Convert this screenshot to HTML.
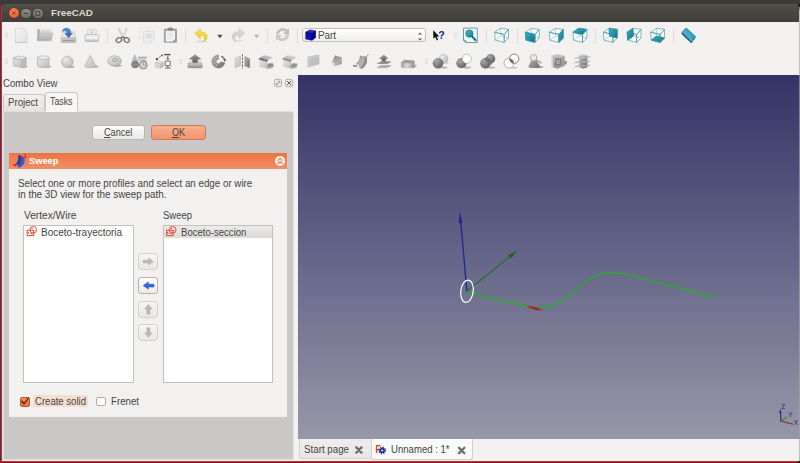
<!DOCTYPE html>
<html><head><meta charset="utf-8"><title>FreeCAD</title>
<style>
*{box-sizing:border-box;margin:0;padding:0}
html,body{width:800px;height:463px;overflow:hidden;background:#f2f1f0;font-family:"Liberation Sans","DejaVu Sans",sans-serif;font-size:10px;color:#3c3b37}
#root{position:absolute;left:0;top:0;width:800px;height:463px;overflow:hidden;background:#f2f1f0}
.abs{position:absolute}
.t{position:absolute;white-space:nowrap;line-height:1;transform-origin:0 0;color:#45443f;font-size:10px}
svg{position:absolute;overflow:visible}
.btn{position:absolute;border:1px solid #b9b6b0;border-radius:3px;background:linear-gradient(#fdfdfc,#ebe9e6)}
.arrowbtn{position:absolute;width:20px;height:17px;border:1px solid #d2cfcb;border-radius:3px;background:linear-gradient(#f6f5f4,#e9e7e4)}
.list{position:absolute;background:#fff;border:1px solid #c4c1bc}
.sep{position:absolute;width:1px;height:16px;top:27.500px;background:#dfddda}
.hdl{position:absolute;width:3px;height:1px;background:#dad8d5;box-shadow:0 2px 0 #dad8d5,0 4px 0 #dad8d5}
</style></head><body>
<div id="root">
 <!-- desktop edges -->
 <div class="abs" style="left:0;top:0;width:2px;height:463px;background:linear-gradient(90deg,#7e1f2e 0,#7e1f2e 50%,#a0606a 100%)"></div>
 <div class="abs" style="left:0;top:461px;width:800px;height:2px;background:linear-gradient(#a83a42 0,#a83a42 50%,#9a0d18 50%)"></div>
 
 <div class="abs" style="left:798px;top:461px;width:2px;height:2px;background:#1a0a0a"></div>
 <!-- desktop top panel -->
 <div class="abs" id="toppanel" style="left:0;top:0;width:800px;height:5px;background:#3c3b37"></div>
 <div class="abs" style="left:2px;top:4px;width:798px;height:6px;background:#3c3b37"></div>
 <!-- title bar -->
 <div class="abs" id="titlebar" style="left:2px;top:4px;width:797px;height:18px;background:linear-gradient(#54524d 0,#4a4944 30%,#3f3e3a 100%);border-radius:4px 4px 0 0"></div>
 <div class="abs" style="left:9px;top:8px;width:10px;height:10px;border-radius:50%;background:radial-gradient(circle at 50% 35%,#f58257,#e0562a);box-shadow:0 0 0 .6px #5a2a18"></div>
 <div class="abs" style="left:21px;top:8.5px;width:9.5px;height:9.5px;border-radius:50%;background:linear-gradient(#8f8d87,#6d6c66);box-shadow:0 0 0 .6px #3a3935"></div>
 <div class="abs" style="left:33px;top:8.5px;width:9.5px;height:9.5px;border-radius:50%;background:linear-gradient(#8f8d87,#6d6c66);box-shadow:0 0 0 .6px #3a3935"></div>
 <svg style="left:9px;top:8px" width="34" height="10" viewBox="0 0 34 10"><path d="M3.400 3.400l3.200 3.200M6.600 3.400l-3.200 3.200" stroke="#8a3412" stroke-width=".9" fill="none"/><path d="M14.6 5.3h4.4" stroke="#45443f" stroke-width="1.1"/><rect x="26.8" y="3.3" width="4" height="4" fill="none" stroke="#45443f" stroke-width="1"/></svg>
 <span class="t" id="title" style="transform:scaleX(1.03);left:51.300px;top:8px;font-size:9.500px;font-weight:bold;color:#dfdbd2">FreeCAD</span>

 <!-- TOOLBARS -->
 <div id="toolbars">
  <div class="hdl" style="left:5px;top:33px"></div>
  <div class="hdl" style="left:5px;top:59px"></div>
  <div class="hdl" style="left:179px;top:59px"></div>
  <div class="hdl" style="left:425px;top:59px"></div>
  <div class="hdl" style="left:454px;top:33px"></div>
  <div class="sep" style="left:107px"></div>
  <div class="sep" style="left:185px"></div>
  <div class="sep" style="left:267px"></div>
  <div class="sep" style="left:297px"></div>
  <div class="sep" style="left:486px"></div>
  <div class="sep" style="left:517px"></div>
  <div class="sep" style="left:595px"></div>
  <div class="sep" style="left:673px"></div>
  <!-- workbench combo -->
  <div class="abs" style="left:302px;top:28px;width:124px;height:14px;border:1px solid #c3c0ba;border-radius:3px;background:linear-gradient(#ffffff,#f0efed)"></div>
  <span class="t" id="tpart" style="transform:scaleX(0.98);left:318px;top:30.5px">Part</span>
  <svg id="icons" style="left:0;top:0" width="800" height="76" viewBox="0 0 800 76"><defs>
<linearGradient id="gPaper" x1="0" y1="0" x2="1" y2="1"><stop offset="0" stop-color="#f3f3f3"/><stop offset="1" stop-color="#e2e2e2"/></linearGradient>
<linearGradient id="gFolder" x1="0" y1="0" x2="0" y2="1"><stop offset="0" stop-color="#cecece"/><stop offset="1" stop-color="#aeaeae"/></linearGradient>
<linearGradient id="gDrive" x1="0" y1="0" x2="0" y2="1"><stop offset="0" stop-color="#d2d2d2"/><stop offset="1" stop-color="#b6b6b6"/></linearGradient>
<linearGradient id="gPrint" x1="0" y1="0" x2="0" y2="1"><stop offset="0" stop-color="#ebebeb"/><stop offset="1" stop-color="#d6d6d6"/></linearGradient>
<linearGradient id="gUndo" x1="0" y1="0" x2="0" y2="1"><stop offset="0" stop-color="#f8e45c"/><stop offset="1" stop-color="#ecc81c"/></linearGradient>
<linearGradient id="gRedo" x1="0" y1="0" x2="0" y2="1"><stop offset="0" stop-color="#dedede"/><stop offset="1" stop-color="#c4c4c4"/></linearGradient>
<linearGradient id="gTeal" x1="0" y1="0" x2="1" y2="1"><stop offset="0" stop-color="#4cc0d8"/><stop offset="1" stop-color="#0e7e98"/></linearGradient>
<linearGradient id="gTeal2" x1="0" y1="0" x2="1" y2="1"><stop offset="0" stop-color="#3cb4cc"/><stop offset="1" stop-color="#0a7088"/></linearGradient>
<linearGradient id="gG1" x1="0" y1="0" x2="1" y2="1"><stop offset="0" stop-color="#e6e6e6"/><stop offset="1" stop-color="#bcbcbc"/></linearGradient>
<linearGradient id="gG2" x1="0" y1="0" x2="1" y2="1"><stop offset="0" stop-color="#bababa"/><stop offset="1" stop-color="#6e6e6e"/></linearGradient>
<linearGradient id="gG3" x1="0" y1="0" x2="0" y2="1"><stop offset="0" stop-color="#9a9a9a"/><stop offset="1" stop-color="#5e5e5e"/></linearGradient>
<linearGradient id="gG4" x1="0" y1="0" x2="0" y2="1"><stop offset="0" stop-color="#c8c8c8"/><stop offset="1" stop-color="#8e8e8e"/></linearGradient>
<linearGradient id="gLoft" x1="0" y1="0" x2="1" y2=".6"><stop offset="0" stop-color="#767676"/><stop offset=".5" stop-color="#c2c2c2"/><stop offset="1" stop-color="#9c9c9c"/></linearGradient>
<linearGradient id="gSw" x1="0" y1="0" x2="1" y2="1"><stop offset="0" stop-color="#8c8c8c"/><stop offset=".5" stop-color="#b4b4b4"/><stop offset="1" stop-color="#929292"/></linearGradient>
<linearGradient id="gRul" x1="0" y1="1" x2="1" y2="0"><stop offset="0" stop-color="#157a96"/><stop offset=".45" stop-color="#44b4d4"/><stop offset="1" stop-color="#157a96"/></linearGradient>
<linearGradient id="gArrow" x1="0" y1="0" x2="0" y2="1"><stop offset="0" stop-color="#5c92d2"/><stop offset="1" stop-color="#2c5ea8"/></linearGradient>
<linearGradient id="gCyl" x1="0" y1="0" x2="1" y2="0"><stop offset="0" stop-color="#9c9c9c"/><stop offset=".45" stop-color="#dcdcdc"/><stop offset="1" stop-color="#8c8c8c"/></linearGradient>
<radialGradient id="gS1" cx=".35" cy=".3" r=".8"><stop offset="0" stop-color="#eaeaea"/><stop offset="1" stop-color="#b4b4b4"/></radialGradient>
<radialGradient id="gS2" cx=".35" cy=".3" r=".8"><stop offset="0" stop-color="#a8a8a8"/><stop offset="1" stop-color="#5c5c5c"/></radialGradient>
</defs>
<g transform="translate(15,28)"><path d="M0.3 0.3h9l2.7 2.7v11.3h-11.7z" fill="url(#gPaper)" stroke="#cfcfcf" stroke-width=".7"/><path d="M9.3 0.3v2.7h2.7" fill="#fafafa" stroke="#d4d4d4" stroke-width=".6"/><path d="M0 14.6h12.3" stroke="#c4c4c4" stroke-width=".8"/></g>
<g transform="translate(37,28)"><path d="M0.200 1.200h3l.8 1h0v10.600h-3.800z" fill="#b2b2b2"/><path d="M0.200 9h2v3.800h-2z" fill="#a2a2a2"/><path d="M3.200 0.200h11v5.400h-11z" fill="#fbfbfb" stroke="#cfcfcf" stroke-width=".5"/><path d="M4 1.600h9.600v4h-9.600z" fill="#d6d6d6"/><path d="M3.400 5h12.600l-1.800 7.800h-13.200z" fill="url(#gFolder)" stroke="#ababab" stroke-width=".4"/></g>
<g transform="translate(61,28)"><path d="M1.800 3.800h11.400l1.400 6.200h-14.200z" fill="#e6e6e6" stroke="#bdbdbd" stroke-width=".6"/><path d="M0.300 10h14.400v4.100q0 .5-.5 .5h-13.400q-.5 0-.5-.5z" fill="url(#gDrive)" stroke="#a6a6a6" stroke-width=".6"/><path d="M1.800 12.400h11.400" stroke="#989898" stroke-width="1.100"/><path d="M1.200 3.600q.4-3.500 4.400-3.700q3.600.1 4.200 4.100l0 1.200h1.700l-3.900 4.600l-3.900-4.600h2.100l0-1q-.3-1.500-1.800-1.500q-1.700 0-2.800 .9z" fill="url(#gArrow)" stroke="#2c5c9c" stroke-width=".3"/></g>
<g transform="translate(85,29)"><path d="M2.600 0.300h8.600v5.500h-8.600z" fill="#ececec" stroke="#c2c2c2" stroke-width=".6"/><path d="M6.900 1.500v2.600m-1.500-1.200l1.500 1.400l1.500-1.400" stroke="#bdbdbd" stroke-width=".8" fill="none"/><path d="M1 5.400h11.800q1 0 1 1v5.600h-13.800v-5.600q0-1 1-1z" fill="url(#gPrint)" stroke="#b4b4b4" stroke-width=".6"/><path d="M1.400 8.600h11" stroke="#fafafa" stroke-width="1.600"/><path d="M0.200 12.400h13.400" stroke="#b0b0b0" stroke-width=".9"/></g>
<g transform="translate(115.600,27.600)" fill="none"><path d="M3.200 0.400l4.800 9.800" stroke="#dadada" stroke-width="2.200"/><path d="M11.200 0.400l-4.800 9.800" stroke="#e0e0e0" stroke-width="2.200"/><path d="M2.300 0.600l4.700 9.600M12.100 .6l-4.700 9.600" stroke="#b4b4b4" stroke-width=".4"/><ellipse cx="3.300" cy="12.500" rx="2.800" ry="2.200" transform="rotate(-30 3.300 12.500)" stroke="#747474" stroke-width="1.400"/><ellipse cx="11.100" cy="12.500" rx="2.800" ry="2.200" transform="rotate(30 11.100 12.500)" stroke="#747474" stroke-width="1.400"/><path d="M5.300 10.800l1.900-1.800l1.900 1.800" stroke="#747474" stroke-width="1.300"/></g>
<g transform="translate(138.800,27.600)"><path d="M0.300 0.300h9.800v10.600h-9.800z" fill="#f0f0f0" stroke="#dcdcdc" stroke-width=".6"/><path d="M4.800 3.800h10.400v8.800l-2.600 2.600h-7.800z" fill="#ededed" stroke="#d2d2d2" stroke-width=".6"/><path d="M6.800 6.200h6.200v4.600h-6.200z" fill="#dcdcdc"/><path d="M15.200 12.600h-2.600v2.600" fill="#fafafa" stroke="#d2d2d2" stroke-width=".5"/></g>
<g transform="translate(163.800,27.600)"><path d="M0.500 1.600h12.200v13h-12.200z" fill="#a4a4a4" stroke="#8e8e8e" stroke-width=".7"/><path d="M2 3.200h9.200v8.400l-2.400 2.400h-6.800z" fill="#f4f4f4"/><path d="M3.400 5.600h6.200M3.400 7.400h6.200M3.400 9.200h6.200M3.400 11h4" stroke="#dadada" stroke-width=".7"/><path d="M3.800 0.500h5.600v2.600h-5.600z" fill="#8a8a8a"/><path d="M5.200 0h2.800v1h-2.800z" fill="#7a7a7a"/><path d="M11.200 11.600l-2.400 2.400h2.400z" fill="#8e8e8e"/></g>
<g transform="translate(194.600,28.200)"><ellipse cx="7" cy="13.200" rx="5.500" ry="1" fill="#dcdad6"/><path d="M5.600 0.200v3.300q6.900 .3 6.900 5.300q-.2 3.400-4 4.400q1.900-1.600 1.500-3.600q-.6-2.300-4.400-2.300v3.300l-5.400-5.200z" fill="url(#gUndo)" stroke="#d8b41c" stroke-width=".5"/></g>
<path d="M217.200 34.800h5.400l-2.700 3.500z" fill="#4a4a48"/>
<g transform="translate(232,28)"><ellipse cx="6" cy="13" rx="5" ry=".9" fill="#e2e0dd"/><path d="M7 0.200v3.300q-6.900 .3-6.900 5.300q.2 3.400 4 4.400q-1.900-1.600-1.500-3.600q.6-2.300 4.400-2.300v3.300l5.400-5.200z" fill="url(#gRedo)" stroke="#c2c2c2" stroke-width=".5"/></g>
<path d="M254 34.800h5.400l-2.700 3.500z" fill="#b2b2b0"/>
<g fill="none" stroke="#c0c0c0" stroke-width="2.700"><path d="M277.400 33.800A5.600 5.600 0 0 1 286.400 30.800"/><path d="M287.600 35.400A5.600 5.600 0 0 1 278.600 38.400" stroke="#c8c8c8"/></g><path d="M283.200 33.800L289 28.600V35.200Z" fill="#bcbcbc"/><path d="M281.800 35.400L276 40.600V34Z" fill="#c6c6c6"/>
<g transform="translate(305.400,29.600)" stroke="#101030" stroke-width=".7" stroke-linejoin="round"><path d="M0.400 2.600l6.200 1v7l-6.200-1.300z" fill="#0a0ae6"/><path d="M6.600 3.600l3.600-2.200v6.600l-3.600 2.600z" fill="#0000a8"/><path d="M0.400 2.600l3.800-2.200l6 1l-3.600 2.200z" fill="#2a2af4"/></g>
<path d="M418 34.600l2-2.200l2 2.200zM418 38.400l2 2.200l2-2.200z" fill="#5a5955"/>
<g transform="translate(433,30)"><path d="M0.300 0.200v8.600l2-1.800l1.500 3.400l1.300-.6l-1.500-3.300h2.700z" fill="#0a0a0a"/><text x="5.200" y="8.800" font-family="Liberation Sans, sans-serif" font-weight="bold" font-size="10.500" fill="#1c1c8c">?</text></g>
<g transform="translate(463,27.600)"><path d="M0.500 0.500h13.800v14.400h-11.600l-2.200-2.200z" fill="#f3f8f9" stroke="#2a8496" stroke-width=".75"/><path d="M0.500 12.700h2.200v2.200" fill="none" stroke="#2a8496" stroke-width=".7"/><circle cx="6.400" cy="6" r="3.600" fill="url(#gTeal)" stroke="#176e80" stroke-width=".8"/><path d="M9 8.800l3.600 3.800" stroke="#176e80" stroke-width="2" stroke-linecap="round"/></g>
<g transform="translate(494.3,28)" stroke="#3f93a3" stroke-width=".65" stroke-linejoin="round" fill="none"><polygon points="0.40,4.25 6.10,0.30 14.20,1.40 14.20,10.00 9.90,14.40 0.90,12.10" fill="#fbfdfd" stroke="none"/><path d="M6.50 8.00L6.10 0.30M6.50 8.00L0.90 12.10M6.50 8.00L14.20 10.00" stroke="#7fb9c4" stroke-width=".6"/><polygon points="0.40,4.25 9.90,6.50 9.90,14.40 0.90,12.10"/><polygon points="0.40,4.25 6.10,0.30 14.20,1.40 9.90,6.50"/><polygon points="9.90,6.50 14.20,1.40 14.20,10.00 9.90,14.40"/></g>
<g transform="translate(525,28)" stroke="#3f93a3" stroke-width=".65" stroke-linejoin="round" fill="none"><polygon points="0.40,4.25 6.10,0.30 14.20,1.40 14.20,10.00 9.90,14.40 0.90,12.10" fill="#fbfdfd" stroke="none"/><path d="M6.50 8.00L6.10 0.30M6.50 8.00L0.90 12.10M6.50 8.00L14.20 10.00" stroke="#7fb9c4" stroke-width=".6"/><polygon points="0.40,4.25 9.90,6.50 9.90,14.40 0.90,12.10" fill="url(#gTeal2)" stroke="#14788c"/><polygon points="0.40,4.25 9.90,6.50 9.90,14.40 0.90,12.10"/><polygon points="0.40,4.25 6.10,0.30 14.20,1.40 9.90,6.50"/><polygon points="9.90,6.50 14.20,1.40 14.20,10.00 9.90,14.40"/></g>
<g transform="translate(549,28)" stroke="#3f93a3" stroke-width=".65" stroke-linejoin="round" fill="none"><polygon points="0.40,4.25 6.10,0.30 14.20,1.40 14.20,10.00 9.90,14.40 0.90,12.10" fill="#fbfdfd" stroke="none"/><path d="M6.50 8.00L6.10 0.30M6.50 8.00L0.90 12.10M6.50 8.00L14.20 10.00" stroke="#7fb9c4" stroke-width=".6"/><polygon points="9.90,6.50 14.20,1.40 14.20,10.00 9.90,14.40" fill="url(#gTeal2)" stroke="#14788c"/><polygon points="0.40,4.25 9.90,6.50 9.90,14.40 0.90,12.10"/><polygon points="0.40,4.25 6.10,0.30 14.20,1.40 9.90,6.50"/><polygon points="9.90,6.50 14.20,1.40 14.20,10.00 9.90,14.40"/></g>
<g transform="translate(572.6,28)" stroke="#3f93a3" stroke-width=".65" stroke-linejoin="round" fill="none"><polygon points="0.40,4.25 6.10,0.30 14.20,1.40 14.20,10.00 9.90,14.40 0.90,12.10" fill="#fbfdfd" stroke="none"/><path d="M6.50 8.00L6.10 0.30M6.50 8.00L0.90 12.10M6.50 8.00L14.20 10.00" stroke="#7fb9c4" stroke-width=".6"/><polygon points="0.40,4.25 6.10,0.30 14.20,1.40 9.90,6.50" fill="url(#gTeal2)" stroke="#14788c"/><polygon points="0.40,4.25 9.90,6.50 9.90,14.40 0.90,12.10"/><polygon points="0.40,4.25 6.10,0.30 14.20,1.40 9.90,6.50"/><polygon points="9.90,6.50 14.20,1.40 14.20,10.00 9.90,14.40"/></g>
<g transform="translate(603,28)" stroke="#3f93a3" stroke-width=".65" stroke-linejoin="round" fill="none"><polygon points="0.40,4.25 6.10,0.30 14.20,1.40 14.20,10.00 9.90,14.40 0.90,12.10" fill="#fbfdfd" stroke="none"/><path d="M6.50 8.00L6.10 0.30M6.50 8.00L0.90 12.10M6.50 8.00L14.20 10.00" stroke="#7fb9c4" stroke-width=".6"/><polygon points="6.10,0.30 14.20,1.40 14.20,10.00 6.50,8.00" fill="url(#gTeal2)" stroke="#14788c"/><polygon points="0.40,4.25 9.90,6.50 9.90,14.40 0.90,12.10"/><polygon points="0.40,4.25 6.10,0.30 14.20,1.40 9.90,6.50"/><polygon points="9.90,6.50 14.20,1.40 14.20,10.00 9.90,14.40"/></g>
<g transform="translate(626.8,28)" stroke="#3f93a3" stroke-width=".65" stroke-linejoin="round" fill="none"><polygon points="0.40,4.25 6.10,0.30 14.20,1.40 14.20,10.00 9.90,14.40 0.90,12.10" fill="#fbfdfd" stroke="none"/><path d="M6.50 8.00L6.10 0.30M6.50 8.00L0.90 12.10M6.50 8.00L14.20 10.00" stroke="#7fb9c4" stroke-width=".6"/><polygon points="0.40,4.25 6.10,0.30 6.50,8.00 0.90,12.10" fill="url(#gTeal2)" stroke="#14788c"/><polygon points="0.40,4.25 9.90,6.50 9.90,14.40 0.90,12.10"/><polygon points="0.40,4.25 6.10,0.30 14.20,1.40 9.90,6.50"/><polygon points="9.90,6.50 14.20,1.40 14.20,10.00 9.90,14.40"/></g>
<g transform="translate(650.3,28)" stroke="#3f93a3" stroke-width=".65" stroke-linejoin="round" fill="none"><polygon points="0.40,4.25 6.10,0.30 14.20,1.40 14.20,10.00 9.90,14.40 0.90,12.10" fill="#fbfdfd" stroke="none"/><path d="M6.50 8.00L6.10 0.30M6.50 8.00L0.90 12.10M6.50 8.00L14.20 10.00" stroke="#7fb9c4" stroke-width=".6"/><polygon points="0.90,12.10 6.50,8.00 14.20,10.00 9.90,14.40" fill="url(#gTeal2)" stroke="#14788c"/><polygon points="0.40,4.25 9.90,6.50 9.90,14.40 0.90,12.10"/><polygon points="0.40,4.25 6.10,0.30 14.20,1.40 9.90,6.50"/><polygon points="9.90,6.50 14.20,1.40 14.20,10.00 9.90,14.40"/></g>
<g transform="translate(681.800,28.300)" stroke-linejoin="round"><path d="M0.100 4l-.3 1.600l9.800 9.400l.5-1z" fill="#27373b"/><path d="M4.400 -.3l9.500 8.800l-3.800 5.500l-10-10z" fill="url(#gRul)" stroke="#1a6e84" stroke-width=".7"/><path d="M10.300 9.600l2 2" stroke="#0e4a5a" stroke-width=".8"/></g>
<!-- box -->
<g transform="translate(13,55.600)"><path d="M9 10.800l6 -.6l-1.500 1.700l-6 .3z" fill="#a6a6a6"/><path d="M0.400 2.500l9 1.400v8l-9-1.600z" fill="url(#gG1)" stroke="#a4a4a4" stroke-width=".6"/><path d="M9.400 3.900l3.800-2v7.600l-3.800 2.400z" fill="#c0c0c0" stroke="#a4a4a4" stroke-width=".6"/><path d="M0.400 2.500l4.200-2.100l8.600 1.500l-3.800 2z" fill="#ececec" stroke="#a4a4a4" stroke-width=".6"/></g>
<!-- cylinder -->
<g transform="translate(37,55.600)"><path d="M9 10.600l5.600 -.2l-1.600 1.500l-5 .2z" fill="#a6a6a6"/><path d="M0.400 2v8q0 1.900 5.800 1.900q5.800 0 5.800-1.900v-8z" fill="url(#gG1)" stroke="#a4a4a4" stroke-width=".6"/><ellipse cx="6.200" cy="2" rx="5.800" ry="1.700" fill="#eeeeee" stroke="#a4a4a4" stroke-width=".6"/></g>
<!-- sphere -->
<g transform="translate(61,56)"><path d="M8 10.400l6.200 -.2l-1.800 1.600l-5.400 .1z" fill="#a0a0a0"/><circle cx="6.300" cy="6" r="5.800" fill="url(#gS1)" stroke="#a8a8a8" stroke-width=".6"/></g>
<!-- cone -->
<g transform="translate(84.500,55)"><path d="M8 11l6.400 -.2l-1.800 1.700l-5.600 .1z" fill="#a0a0a0"/><path d="M5.800 0.300l5.600 10.900q-.4 1.500-5.600 1.500q-5.200 0-5.600-1.500z" fill="url(#gG1)" stroke="#a8a8a8" stroke-width=".6"/></g>
<!-- torus -->
<g transform="translate(107.600,55.600)"><path d="M8 9.600l7 -.2l-2 1.600l-6 .1z" fill="#a0a0a0"/><ellipse cx="7" cy="5.400" rx="6.800" ry="5.200" fill="url(#gS1)" stroke="#a2a2a2" stroke-width=".6"/><ellipse cx="7.200" cy="4.400" rx="2.900" ry="1.700" fill="#c6c6c6" stroke="#9a9a9a" stroke-width=".6"/></g>
<!-- primitives -->
<g transform="translate(131.500,54)"><path d="M3.300 0.400l2.800 6.400h-5.600z" fill="#bcbcbc" stroke="#a8a8a8" stroke-width=".4"/><path d="M6.600 3.300h9" stroke="#7c7c7c" stroke-width=".8"/><path d="M6.600 4.200h8.200v3h-8.200z" fill="#c8c8c8"/><circle cx="3.600" cy="10.400" r="3.500" fill="#7c7c7c" stroke="#606060" stroke-width=".5"/><path d="M0.300 10.400h6.600M3.600 7v6.800M1.200 8.200q2.400 2.200 0 4.400M6 8.200q-2.400 2.200 0 4.400" stroke="#a8a8a8" stroke-width=".4" fill="none"/><circle cx="11.800" cy="11" r="3.900" fill="#d2d2d2" stroke="#6c6c6c" stroke-width=".8"/><path d="M11.800 7.600v3.600h2.600" stroke="#8a8a8a" stroke-width=".6" fill="none"/></g>
<!-- shape builder -->
<g transform="translate(155,53.600)"><path d="M9.200 1h6.400" stroke="#4a4a4a" stroke-width="1.300"/><path d="M12.800 2.200v3.600m-1.400-1.400l1.400 1.600l1.400-1.600" stroke="#5a5a5a" stroke-width=".9" fill="none"/><path d="M10.200 7.400h5v4.600h-5z" fill="#fafafa" stroke="#5e5e5e" stroke-width=".9"/><path d="M12.800 12.400v1.400M10 14.400h5.600" stroke="#5a5a5a" stroke-width="1"/><path d="M2.200 5.400l4.600-3.600" stroke="#5a5a5a" stroke-width=".9" stroke-dasharray="1.200 .8"/><circle cx="1.900" cy="5.600" r="1.100" fill="#3e3e3e"/><circle cx="7" cy="1.700" r=".9" fill="#4a4a4a"/><path d="M0.400 9l5.400 .8v5l-5.400-1z" fill="#d4d4d4" stroke="#b4b4b4" stroke-width=".4"/><path d="M5.800 9.800l2.600-1.400v4.800l-2.600 1.600z" fill="#bebebe" stroke="#b0b0b0" stroke-width=".4"/><path d="M0.400 9l2.600-1.400l5.400 .8l-2.600 1.400z" fill="#e6e6e6" stroke="#b8b8b8" stroke-width=".4"/></g>
<!-- extrude -->
<g transform="translate(187.600,54.600)"><path d="M10 11.400l5.600 -.4l-1 1.900l-5 .3z" fill="#b4b4b4"/><path d="M0.300 9l3.200-2.600h8.600l2.400 2.600z" fill="#dcdcdc" stroke="#a8a8a8" stroke-width=".5"/><path d="M0.300 9h14.200v3.400q0 1-1 1h-12.200q-1 0-1-1z" fill="url(#gG4)" stroke="#9a9a9a" stroke-width=".4"/><path d="M7.500 0.100l5.600 4.400h-3.200v3.400h-4.800v-3.400h-3.200z" fill="url(#gG3)" stroke="#585858" stroke-width=".4"/></g>
<!-- revolve -->
<g transform="translate(211.200,54.600)"><path d="M7.200 0.400a6.500 6.500 0 1 0 6.400 7.600l-4.200-.6a2.300 2.300 0 1 1 -2.200-2.800z" fill="url(#gG2)" stroke="#6c6c6c" stroke-width=".5"/><path d="M1.200 9.400l5 -1.800M4 12.800l2.800-4" stroke="#c8c8c8" stroke-width=".5"/><path d="M10 1.600q3.400 1.200 3.600 4.400" stroke="#5a5a5a" stroke-width="1.200" fill="none"/><path d="M12 5l1.800 2.200l1-2.800z" fill="#5a5a5a"/><circle cx="7.200" cy="7" r="1" fill="#fafafa"/></g>
<!-- mirror -->
<g transform="translate(235,54.200)"><path d="M0.200 3.900l5.300-2.200v9.800l-5.300 2z" fill="url(#gG1)" stroke="#a0a0a0" stroke-width=".4"/><path d="M9.800 2.100l4.900 2.600v8.800l-4.900-1.700z" fill="url(#gG2)" stroke="#808080" stroke-width=".4"/><path d="M7.500 0v14.600" stroke="#5c5c5c" stroke-width=".9" stroke-dasharray="2.400 1"/></g>
<!-- fillet -->
<g transform="translate(258.600,55)"><path d="M6.00 0.10L14.40 2.30L13.05 3.17L4.65 0.97Z" fill="#cecece"/><path d="M4.65 0.82L13.05 3.02L11.70 3.90L3.30 1.70Z" fill="#ababab"/><path d="M3.30 1.55L11.70 3.75L10.35 4.62L1.95 2.42Z" fill="#c4c4c4"/><path d="M1.95 2.27L10.35 4.47L9.00 5.35L0.60 3.15Z" fill="#8c8c8c"/><path d="M0.600 3q-.3 .8 0 2l8.200 2.200q-.2-1.300.2-2z" fill="#6c6c6c"/><path d="M0.600 4.800l8.200 2.200v6.400l-8.200-1.600z" fill="url(#gG1)"/><path d="M8.800 9.700l1.400-1.500l4.700 .4v3.200l-6.100 1.600z" fill="#8e8e8e"/><path d="M7 13.100l7.900-1.400l-2.100 1.900l-4 .4z" fill="#b8b8b8"/></g>
<!-- chamfer -->
<g transform="translate(282.200,55)"><path d="M6.00 0.10L14.40 2.30L13.05 3.17L4.65 0.97Z" fill="#d6d6d6"/><path d="M4.65 0.82L13.05 3.02L11.70 3.90L3.30 1.70Z" fill="#bcbcbc"/><path d="M3.30 1.55L11.70 3.75L10.35 4.62L1.95 2.42Z" fill="#cccccc"/><path d="M1.95 2.27L10.35 4.47L9.00 5.35L0.60 3.15Z" fill="#a6a6a6"/><path d="M0.600 3l0 2l8.200 2.200l.2-2z" fill="#8a8a8a"/><path d="M0.600 4.800l8.200 2.200v6.400l-8.200-1.600z" fill="url(#gG1)"/><path d="M8.800 9.700l1.400-1.500l4.700 .4v3.200l-6.100 1.600z" fill="#969696"/><path d="M7 13.100l7.900-1.400l-2.100 1.900l-4 .4z" fill="#bcbcbc"/></g>
<!-- face -->
<g transform="translate(307.400,54.600)"><path d="M0.500 2.600l11-2.200v9l-11 3z" fill="url(#gG1)" stroke="#a2a2a2" stroke-width=".6"/><path d="M1.600 3.600l8.800-1.800v6.800l-8.800 2.400z" fill="#b4b4b4" opacity=".6"/></g>
<!-- loft -->
<g transform="translate(331.400,55)"><path d="M3.400 0.400l7 1.900v6.800l-6.500 1.900l-3.100-.5v-3.700z" fill="url(#gLoft)"/><path d="M3.400 0.400l7 1.900l-7 6.400z" fill="#8a8a8a" opacity=".55"/><path d="M1.200 7.600h1.500v2.900h-1.500z" fill="#fafafa"/></g>
<!-- sweep -->
<g transform="translate(353,54)"><path d="M7 1.400l6.800 1.600q1.400 8.200-5.200 11.700l-3.800-1.700l-1.700-3.800q3.600-2.200 3.900-7.800z" fill="url(#gSw)"/><path d="M13.800 3q1.400 8.200-5.200 11.700l-1.600-.7q5.400-3.800 4.400-11.500z" fill="#8a8a8a"/><path d="M0 10.900l4.200 .6l-.2 1.600l-4-.6z" fill="#7c7c7c"/><path d="M4.400 10.600l1.500 .3v3l-1.500-.6z" fill="#f6f6f6"/><path d="M13.400 3.200l1.900-2.800" stroke="#8a8a8a" stroke-width=".9" fill="none"/></g>
<!-- offset -->
<g transform="translate(377.200,55)"><path d="M6.600 0l4.400 3.600h-2.400v2.600h-4v-2.600h-2.400z" fill="url(#gG3)" stroke="#585858" stroke-width=".3"/><path d="M0.200 8.600l3.600-1.800h9.800l-3.400 1.800z" fill="#7e7e7e" stroke="#6a6a6a" stroke-width=".4"/><path d="M0.200 12.600l3.600-2h9.800l-3.400 2z" fill="#b2b2b2" stroke="#8a8a8a" stroke-width=".5"/></g>
<!-- thickness -->
<g transform="translate(401.200,60)"><ellipse cx="13.600" cy="5.800" rx="1.800" ry="1.400" fill="#b2b2b2"/><path d="M0.200 2.800l3-2.500l9.600 .6l.2 2.400z" fill="#b8b8b8" stroke="#7c7c7c" stroke-width=".7"/><path d="M3.400 1.300l7.800 .5l.1 .9l-8.900-.3z" fill="#8e8e8e"/><path d="M0.200 2.800l12.800 .5v4.700l-12.800-.4z" fill="url(#gCyl)" stroke="#9a9a9a" stroke-width=".3"/></g>
<!-- boolean -->
<g transform="translate(432.400,54)"><ellipse cx="11.400" cy="13.400" rx="3.600" ry="1" fill="#9c9c9c" opacity=".75"/><ellipse cx="14.400" cy="9" rx="1.800" ry=".7" fill="#b0b0b0" opacity=".7"/><circle cx="11" cy="4.800" r="4.600" fill="url(#gS1)" stroke="#ababab" stroke-width=".4"/><circle cx="5.600" cy="9.200" r="5.300" fill="url(#gS2)"/></g>
<!-- cut -->
<g transform="translate(456.200,54)"><ellipse cx="11" cy="13.400" rx="3.600" ry="1" fill="#9c9c9c" opacity=".75"/><circle cx="5.200" cy="9.200" r="5.100" fill="url(#gS2)"/><circle cx="10.600" cy="4.800" r="4.600" fill="#fdfdfd" stroke="#9a9a9a" stroke-width=".6"/></g>
<!-- fuse -->
<g transform="translate(480,54)"><ellipse cx="11.400" cy="13.400" rx="3.600" ry="1" fill="#9c9c9c" opacity=".75"/><circle cx="10.600" cy="4.800" r="4.700" fill="url(#gS2)"/><circle cx="5.400" cy="9.200" r="5.200" fill="url(#gS2)"/><path d="M3.800 4.600l3.600-1.600l5.800 5l-2.600 3.400z" fill="#717171" opacity=".8"/></g>
<!-- common -->
<g transform="translate(503.800,54)"><ellipse cx="10.600" cy="13.800" rx="3.200" ry=".8" fill="#9c9c9c" opacity=".7"/><circle cx="5.200" cy="9.200" r="5" fill="#fdfdfd" stroke="#8e8e8e" stroke-width=".7"/><circle cx="10.400" cy="4.800" r="4.700" fill="#fdfdfd" stroke="#8e8e8e" stroke-width=".7"/><path d="M5.800 4.400a5 5 0 0 1 4.300 5a4.700 4.700 0 0 1 -4.300 -5z" fill="#6a6a6a"/><circle cx="10.400" cy="4.800" r="4.700" fill="none" stroke="#8e8e8e" stroke-width=".7"/></g>
<!-- check geometry -->
<g transform="translate(528,54)"><path d="M9 12.400l6.400-.3l-1.600 1.800l-5 .1z" fill="#a2a2a2"/><path d="M5.600 1.800l6.800 11q-.6 1.300-6.200 1.300q-5.600 0-6-1.300z" fill="url(#gG2)"/><path d="M7.800 5.600l5.800 3.600" stroke="#8a8a8a" stroke-width="1.100"/><circle cx="5.600" cy="3.700" r="3.300" fill="#e8e8e8" stroke="#a0a0a0" stroke-width=".8"/></g>
<!-- section -->
<g transform="translate(551,54)"><path d="M0.200 0.600l3.600 1.400v12.800l-3.600-2z" fill="#d6d6d6"/><path d="M2.400 1.800l4-1.200l7 1.600v9.600l-7 2.800l-4-1.600z" fill="url(#gG4)" stroke="#9c9c9c" stroke-width=".4"/><path d="M4 4.200h6.400v7.200h-6.400z" fill="#7e7e7e"/><path d="M5.400 5.800h3.400v4.200h-3.400z" fill="#a6a6a6"/><path d="M10.200 4.400l3.200-2.200v9.600l-3.200 -.6z" fill="#9e9e9e"/><path d="M13.400 7h2.200v3.400h-2.200z" fill="#8a8a8a"/></g>
<!-- cross sections -->
<g transform="translate(574.400,54)"><path d="M5 1.600l4-1.200l4 1.200v11.600l-4 1.600l-4-1.600z" fill="url(#gG2)"/><path d="M5 1.600l4-1.200l4 1.200l-4 1.200z" fill="#c8c8c8"/><path d="M0.200 4.200l5-1.400h10.800l-5 1.400z" fill="#d0d0d0" stroke="#9a9a9a" stroke-width=".4" opacity=".9"/><path d="M0.200 8.600l5-1.400h10.800l-5 1.400z" fill="#c4c4c4" stroke="#909090" stroke-width=".4" opacity=".9"/><path d="M0.200 12.600l5-1.400h10.800l-5 1.400z" fill="#c4c4c4" stroke="#909090" stroke-width=".4" opacity=".9"/></g>
</svg>
 </div>

 <!-- Combo view -->
 <span class="t" id="combo" style="transform:scaleX(0.965);left:3px;top:79px">Combo View</span>
 <div class="abs" style="left:2.700px;top:93.800px;width:42px;height:17.200px;border:1px solid #cbc8c3;border-bottom:none;border-radius:3px 3px 0 0;background:linear-gradient(#f1f0ee,#e5e3e0)"></div>
 <div class="abs" style="left:44.500px;top:91.500px;width:33.300px;height:20.500px;border:1px solid #cbc8c3;border-bottom:none;border-radius:3px 3px 0 0;background:#f7f6f5"></div>
 <span class="t" id="tproject" style="transform:scaleX(0.965);left:8px;top:98px">Project</span>
 <span class="t" id="ttasks" style="transform:scaleX(0.88);left:50px;top:97px">Tasks</span>
 <!-- panel -->
 <div class="abs" id="panelb" style="left:2px;top:111px;width:292px;height:349px;background:#dfdedc;border-radius:0 3px 0 0"></div>
 <div class="abs" id="panel" style="left:4px;top:112px;width:289px;height:347px;background:#cac8c6;border-radius:0 2px 0 0"></div>
 <div class="abs" style="left:46px;top:111px;width:31px;height:1px;background:#f7f6f5"></div>
 <!-- buttons -->
 <div class="btn" style="left:92px;top:125px;width:53px;height:15px"></div>
 <div class="btn" style="left:151px;top:125px;width:55px;height:15px;border-color:#cd7a56;background:linear-gradient(#f9b090,#f2946b)"></div>
 <span class="t" id="tcancel" style="transform:scaleX(0.91);left:104px;top:128px"><u>C</u>ancel</span>
 <span class="t" id="tok" style="transform:scaleX(0.91);left:171.5px;top:128px"><u>O</u>K</span>
 <!-- sweep box -->
 <div class="abs" style="left:9px;top:152.500px;width:278.300px;height:264px;background:#f2f1f0"></div>
 <div class="abs" style="left:9px;top:152.500px;width:278.300px;height:16.300px;background:linear-gradient(#ee7443,#f28f66)"></div>
 <span class="t" id="tsweeph" style="transform:scaleX(0.975);left:29px;top:156.200px;font-size:9.500px;font-weight:bold;color:#fff">Sweep</span>
 <div class="abs" style="left:275.400px;top:156.300px;width:9.500px;height:9.500px;border-radius:50%;background:#fdf1eb"></div>
 <span class="t" id="tl1" style="transform:scaleX(0.978);left:18px;top:179px">Select one or more profiles and select an edge or wire</span>
 <span class="t" id="tl2" style="transform:scaleX(0.985);left:18px;top:190px">in the 3D view for the sweep path.</span>
 <span class="t" id="tvw" style="transform:scaleX(1.015);left:23.5px;top:211px">Vertex/Wire</span>
 <span class="t" id="tsw" style="transform:scaleX(0.95);left:163px;top:211px">Sweep</span>
 <div class="list" style="left:23px;top:225px;width:111px;height:158px"></div>
 <div class="list" style="left:163px;top:225px;width:110px;height:158px"></div>
 <div class="abs" style="left:164px;top:226px;width:108px;height:12px;background:linear-gradient(#ebeae8,#dcdad7)"></div>
 <span class="t" id="tbt" style="transform:scaleX(1.0);left:41px;top:227.600px">Boceto-trayectoria</span>
 <span class="t" id="tbs" style="transform:scaleX(0.957);left:180.500px;top:227.600px">Boceto-seccion</span>
 <div class="arrowbtn" style="left:138.400px;top:253px"></div>
 <div class="arrowbtn" style="left:138.400px;top:276.800px;border-color:#b3b0aa;background:linear-gradient(#fdfdfc,#eeece9)"></div>
 <div class="arrowbtn" style="left:138.400px;top:300.500px"></div>
 <div class="arrowbtn" style="left:138.400px;top:324.300px"></div>
 <!-- checkboxes -->
 <div class="abs" style="left:19.5px;top:396.5px;width:10px;height:10px;border-radius:2px;background:linear-gradient(#f28c62,#ea6f3e);border:1px solid #b9562f"></div>
 <div class="abs" style="left:33px;top:394.5px;width:55px;height:12.5px;background:#f6ddd2"></div>
 <span class="t" id="tcs" style="transform:scaleX(0.955);left:35px;top:396.5px">Create solid</span>
 <div class="abs" style="left:96px;top:396.5px;width:9.5px;height:9.5px;border-radius:2px;background:#fff;border:1px solid #aeaba5"></div>
 <span class="t" id="tfr" style="transform:scaleX(0.97);left:111px;top:396.5px">Frenet</span>

 <!-- 3D view -->
 <div class="abs" id="view3d" style="left:298.300px;top:74.800px;width:501.700px;height:364.600px;background:linear-gradient(rgb(51,51,102),rgb(151,151,170))"></div>
<svg id="scene" style="left:0;top:0" width="800" height="463" viewBox="0 0 800 463">
  <g fill="none" stroke-linecap="round" stroke-linejoin="round">
   <path d="M466.8 290.8L460.3 216" stroke="#24248f" stroke-width="1.3"/>
   <path d="M460 211.8L458.6 223.2L462.3 222.9Z" fill="#24248f" stroke="none"/>
   <path d="M467 291L512 255" stroke="#1f6e25" stroke-width="1.1"/>
   <path d="M517.4 250.8L508.3 255.2L510.8 258.3Z" fill="#1d5f22" stroke="none"/>
   <path d="M467 292.2L520 304.5L536.5 308.2Q546 307.6 554.4 305Q561 302.5 566.8 298L588.8 278.9Q596 275 603.9 272.8L614.9 272.8L624.5 273.9L715.8 297.3" stroke="#27ad2b" stroke-width="1.4"/>
   <path d="M543.200 310.300L536.500 307.300L526 305.500L530.500 308.600L536 310.300Z" fill="#a3282c" stroke="none"/>
   <ellipse cx="467" cy="291.2" rx="6.2" ry="11.2" transform="rotate(7 467 291.2)" stroke="#fff" stroke-width="1.2"/>
   <path d="M781 421.2L780.4 411" stroke="#2a2a9a" stroke-width="1.2"/>
   <path d="M780.3 408.8L779.2 413L781.6 413Z" fill="#2a2a9a" stroke="none"/>
   <path d="M781 421.2L786.8 417" stroke="#2a9a3a" stroke-width="1.2"/>
   <path d="M781 421.2L792.5 424" stroke="#a02a30" stroke-width="1.2"/>
  </g>
  <g font-family="Liberation Sans, sans-serif" font-size="6.5" fill="#2b2b40">
   <text x="781.3" y="408.8">Z</text><text x="788.3" y="416.8">Y</text><text x="793.8" y="425">X</text>
  </g>
 </svg>
 <!-- bottom tabs -->

 <div class="abs" style="left:299px;top:439px;width:73px;height:20px;border:1px solid #d6d3cf;border-top:none;border-radius:0 0 3px 3px;background:linear-gradient(#eeedeb,#e9e7e5)"></div>
 <div class="abs" style="left:371px;top:439px;width:102px;height:21.300px;border:1px solid #d3d0cb;border-top:none;border-radius:0 0 3px 3px;background:#fafaf9"></div>
 <span class="t" id="tsp" style="transform:scaleX(0.975);left:304px;top:445px">Start page</span>
 <span class="t" id="tun" style="transform:scaleX(0.958);left:391px;top:445px">Unnamed : 1*</span>
<div class="abs" style="left:799px;top:5px;width:1px;height:456px;background:rgba(165,163,166,.68)"></div>
<div class="abs" style="left:798px;top:4px;width:2px;height:3px;background:linear-gradient(90deg,rgba(20,14,14,.45),#140e0e)"></div>
<svg id="details" style="left:0;top:0" width="800" height="463" viewBox="0 0 800 463">
  <!-- float / close dock buttons -->
  <g fill="none" stroke-linecap="round">
   <rect x="274.300" y="79.400" width="7.300" height="7.300" rx="1.500" fill="#eeedeb" stroke="#a5a39f" stroke-width=".8"/>
   <rect x="285.400" y="79.400" width="7.300" height="7.300" rx="1.500" fill="#eeedeb" stroke="#a5a39f" stroke-width=".8"/>
   <path d="M276.300 84.700l3.400-3.400M278.200 81.200h1.600v1.600M276.200 83.200v1.600h1.600" stroke="#8e8c88" stroke-width=".8"/>
   <path d="M287.200 81.200l3.700 3.700M290.900 81.200l-3.700 3.700" stroke="#55544f" stroke-width="1"/>
  </g>
  <!-- sweep header icon -->
  <g>
   <path d="M18.600 154.900l5.600 2.300q2.600 6.600-4.800 10.500l-5-2.200q4.600-4.200 4.200-10.600z" fill="#3a56bc"/>
   <path d="M18.600 154.900l2.400 1q.8 6.400-3.800 10.800l-2.800-1.200q4.600-4.200 4.200-10.600z" fill="#2b3f9e"/>
   <path d="M24.200 157.200q2.600 6.600-4.800 10.500" fill="none" stroke="#7088dc" stroke-width=".7"/>
   <path d="M20.500 163.500q2-1.500 2.800-4" fill="none" stroke="#c04858" stroke-width=".5"/>
   <path d="M23.500 157.800l2-3.600l.5 4.400z" fill="#f02818"/>
   <path d="M24.200 154.300l1.800 .3" stroke="#f02818" stroke-width=".9"/>
   <path d="M11.800 164.100l4.600 .3l1.200 2.700l-2.600 -.5z" fill="#f02818"/>
   <path d="M16.200 164.500h1.700v2.700h-1.700z" fill="#f47a6a"/>
  </g>
  <!-- header chevrons -->
  <path d="M277.800 160.400l2.300-2.200l2.300 2.200M277.800 163.600l2.300-2.200l2.300 2.200" fill="none" stroke="#ee7a4c" stroke-width="1.100" stroke-linecap="round" stroke-linejoin="round"/>
  <!-- sketch icons -->
  <g fill="none" stroke="#f0483a" stroke-width="1">
   <circle cx="33.300" cy="229.800" r="3.300"/><rect x="27.200" y="230.300" width="6.600" height="5.300"/>
   <path d="M30 233.400a3.300 3.300 0 0 0 3.600-.3" stroke-width=".8"/>
   <circle cx="172.700" cy="229.800" r="3.300"/><rect x="166.600" y="230.300" width="6.600" height="5.300"/>
   <path d="M169.400 233.400a3.300 3.300 0 0 0 3.600-.3" stroke-width=".8"/>
  </g>
  <g fill="#55423e"><rect x="31.600" y="228" width=".9" height=".9"/><rect x="27.900" y="232" width=".9" height="1.400"/><rect x="171" y="228" width=".9" height=".9"/><rect x="167.300" y="232" width=".9" height="1.400"/></g>
  <!-- arrows in buttons -->
  <path d="M143 260.300h5.600v-2.200l4.800 3.500l-4.800 3.500v-2.200h-5.600z" fill="#b9b9b9" stroke="#a4a4a4" stroke-width=".4"/>
  <path d="M154 284.200h-5.600v-2.300l-5.200 3.700l5.200 3.700v-2.300h5.600z" fill="#2f66ea" stroke="#1f4cc0" stroke-width=".5"/>
  <path d="M146.800 314v-5h-2.200l3.800-4.600l3.800 4.600h-2.200v5z" fill="#b9b9b9" stroke="#a4a4a4" stroke-width=".4"/>
  <path d="M146.800 327.800v5h-2.200l3.800 4.600l3.800-4.600h-2.200v-5z" fill="#b9b9b9" stroke="#a4a4a4" stroke-width=".4"/>
  <!-- check -->
  <path d="M21.800 401.200l2.300 2.600l4.200-5.600" fill="none" stroke="#5a2a14" stroke-width="1.300" stroke-linecap="round" stroke-linejoin="round"/>
  <!-- tab close icons -->
  <path d="M356.300 447.400l5.200 5.200M361.500 447.400l-5.200 5.200" stroke="#6b6a66" stroke-width="2.300" stroke-linecap="round"/>
  <path d="M459 447.800l5.400 5.400M464.400 447.800l-5.400 5.400" stroke="#6b6a66" stroke-width="2.300" stroke-linecap="round"/>
  <!-- freecad doc icon -->
  <text transform="translate(375.500,453) scale(.82,1)" font-family="Liberation Sans, sans-serif" font-weight="bold" font-size="10.600" fill="#ee3010">F</text>
  <circle cx="382.200" cy="450.400" r="3.100" fill="none" stroke="#1c2c9c" stroke-width="1.500" stroke-dasharray="1.250 1.185"/>
  <circle cx="382.200" cy="450.400" r="2.700" fill="#1c2c9c"/>
  <circle cx="382.200" cy="450.400" r="1" fill="#f4f4fa"/>
 </svg>
</div>
</body></html>
